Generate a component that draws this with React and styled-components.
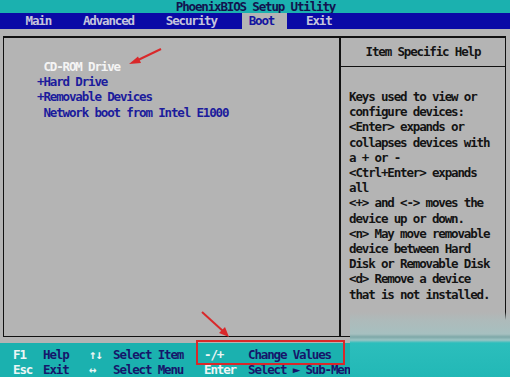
import React from "react";
import styled, { createGlobalStyle } from "styled-components";

const COL = 6.375;
const col = (n) => `${n * COL}px`;

const GlobalStyle = createGlobalStyle`
  html, body {
    margin: 0;
    padding: 0;
    background: #b4b4b4;
  }
  #root {
    width: 510px;
    height: 377px;
  }
`;

const Screen = styled.div`
  position: relative;
  width: 510px;
  height: 377px;
  display: flex;
  flex-direction: column;
  background: #b4b4b4;
  overflow: hidden;
  font-family: "DejaVu Sans Mono", "Liberation Mono", monospace;
  font-weight: bold;
  font-size: 12.5px;
  letter-spacing: -1.15px;
  line-height: 15.2px;
  white-space: pre;
`;

const TitleBar = styled.div`
  height: 13px;
  line-height: 13px;
  background: #1bb1af;
  color: #12124e;
  text-align: center;
  padding-left: 1px;
`;

const TabBar = styled.div`
  height: 16px;
  line-height: 16px;
  background: #0a0aa6;
  display: flex;
  padding-left: ${col(4)};
`;

const Tab = styled.div`
  margin-left: ${(p) => col(p.$gap || 0)};
  padding: ${(p) => (p.$active ? `0 ${col(2)} 0 ${col(1)}` : "0")};
  background: ${(p) => (p.$active ? "#b4b4b4" : "transparent")};
  color: ${(p) => (p.$active ? "#1414a0" : "#c4c4dc")};
`;

const Body = styled.div`
  flex: 1;
  padding: 7px 4px 6px 3px;
  display: flex;
`;

const Frame = styled.div`
  flex: 1;
  display: grid;
  grid-template-columns: 337px 1fr;
  border: 1px solid #111;
  border-top-width: 2px;
`;

const ItemList = styled.div`
  border-right: 2px solid #111;
  padding: 21px 0 0 33px;
  display: flex;
  flex-direction: column;
`;

const Item = styled.div`
  color: ${(p) => (p.$selected ? "#f4f4f4" : "#1c1c9c")};
`;

const HelpPane = styled.div`
  display: flex;
  flex-direction: column;
`;

const HelpHeader = styled.div`
  height: 28px;
  line-height: 28px;
  border-bottom: 1px solid #111;
  text-align: center;
  color: #141414;
`;

const HelpText = styled.div`
  padding: 22px 0 0 8px;
  color: #141414;
`;

const Footer = styled.div`
  height: 34px;
  background: #1bb1af;
  padding: 4px 0 0 13px;
  box-sizing: border-box;
  display: grid;
  grid-template-columns: 30px 46px 24px 91px 44px 1fr;
  grid-auto-rows: 15.2px;
`;

const Key = styled.span`
  color: #eef6f6;
`;

const Desc = styled.span`
  color: #16166a;
`;

const Smudge = styled.div`
  position: absolute;
  left: 350px;
  top: 312px;
  width: 160px;
  height: 65px;
  background: linear-gradient(
    to bottom,
    rgba(180, 182, 182, 0) 0px,
    #aebaba 8px,
    #a6c0c0 22px,
    #7ea8a8 25px,
    #9cc4c4 28px,
    #2cbebc 31px,
    #22b8b6 65px
  );
`;

const Marks = styled.svg`
  position: absolute;
  left: 0;
  top: 0;
  pointer-events: none;
`;

const items = [
  { label: " CD-ROM Drive", selected: true },
  { label: "+Hard Drive" },
  { label: "+Removable Devices" },
  { label: " Network boot from Intel E1000" },
];

const help = [
  "Keys used to view or",
  "configure devices:",
  "<Enter> expands or",
  "collapses devices with",
  "a + or -",
  "<Ctrl+Enter> expands",
  "all",
  "<+> and <-> moves the",
  "device up or down.",
  "<n> May move removable",
  "device between Hard",
  "Disk or Removable Disk",
  "<d> Remove a device",
  "that is not installed.",
];

const keys = [
  ["F1", "Help", "↑↓", "Select Item", "-/+", "Change Values"],
  ["Esc", "Exit", "↔", "Select Menu", "Enter", "Select ► Sub-Menu"],
];

export default function App() {
  return (
    <>
      <GlobalStyle />
      <Screen>
        <TitleBar>PhoenixBIOS Setup Utility</TitleBar>
        <TabBar>
          <Tab>Main</Tab>
          <Tab $gap={5}>Advanced</Tab>
          <Tab $gap={5}>Security</Tab>
          <Tab $gap={4} $active>
            Boot
          </Tab>
          <Tab $gap={3}>Exit</Tab>
        </TabBar>
        <Body>
          <Frame>
            <ItemList>
              {items.map((it) => (
                <Item key={it.label} $selected={it.selected}>
                  {it.label}
                </Item>
              ))}
            </ItemList>
            <HelpPane>
              <HelpHeader>Item Specific Help</HelpHeader>
              <HelpText>
                {help.map((l, i) => (
                  <div key={i}>{l}</div>
                ))}
              </HelpText>
            </HelpPane>
          </Frame>
        </Body>
        <Footer>
          {keys.map((row) =>
            row.map((t, i) =>
              i % 2 === 0 ? <Key key={t}>{t}</Key> : <Desc key={t}>{t}</Desc>
            )
          )}
        </Footer>
        <Smudge />
        <Marks width="510" height="377" viewBox="0 0 510 377">
          <g stroke="#d9282a" fill="#d9282a">
            <line x1="161" y1="49" x2="136" y2="61" strokeWidth="2" />
            <polygon points="129,64 138,56.5 141,63" stroke="none" />
            <line x1="202" y1="312" x2="224" y2="332" strokeWidth="2" />
            <polygon points="229,337 219,333 225,327" stroke="none" />
            <rect x="197" y="341" width="147" height="23" fill="none" strokeWidth="2" />
          </g>
        </Marks>
      </Screen>
    </>
  );
}
